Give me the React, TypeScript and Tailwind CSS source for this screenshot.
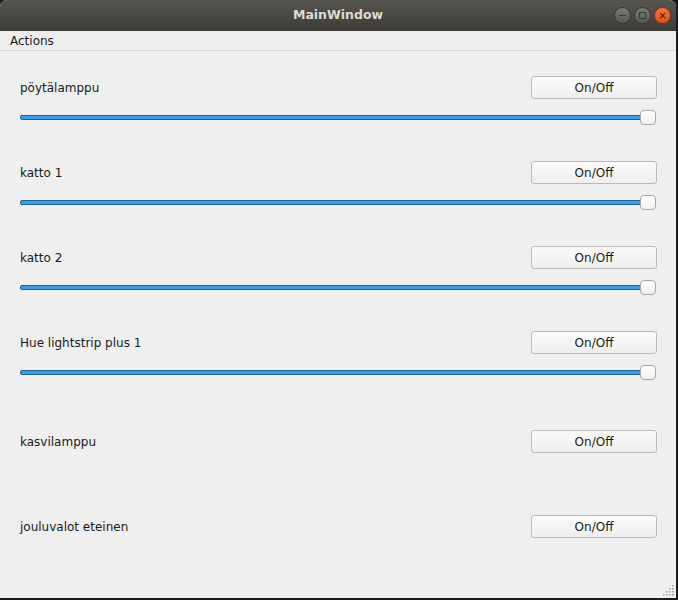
import React from "react";

const Slider = () => (
  <div className="relative h-[15px] w-[636px] ml-[20px]">
    <div className="absolute left-0 top-[5px] h-[5px] w-[628px] rounded-[2px] border border-[#1f5f92] bg-[#3c9ee0]" />
    <div className="absolute left-[620px] top-0 h-[15px] w-[16px] rounded-[4px] border border-[#a8a8a8] bg-gradient-to-b from-white to-[#f0f0f0]" />
  </div>
);

const Btn = () => (
  <button className="h-[23px] w-[126px] rounded-[3px] border border-[#b9b9b9] bg-gradient-to-b from-[#fbfbfb] to-[#eeeeee] text-[12px] text-[#1a1a1a] leading-none">
    On/Off
  </button>
);

const Row = ({ label, slider, mt }: { label: string; slider: boolean; mt: string }) => (
  <div className={mt}>
    <div className="flex items-center justify-between pl-[20px] pr-[19px]">
      <span className="text-[12px] text-[#1a1a1a]">{label}</span>
      <Btn />
    </div>
    {slider && <div className="mt-[11px]"><Slider /></div>}
  </div>
);

const Grip = () => {
  const dots: [number, number][] = [];
  for (let r = 0; r < 4; r++) {
    for (let c = 3 - r; c < 4; c++) {
      dots.push([c * 3, r * 3]);
    }
  }
  return (
    <svg className="absolute right-[2px] bottom-[2px]" width="11" height="11" viewBox="0 0 11 11">
      {dots.map(([x, y], i) => (
        <rect key={i} x={x} y={y} width="1.5" height="1.5" fill="#a0a0a0" />
      ))}
    </svg>
  );
};

export default function App() {
  return (
    <div className="w-[678px] h-[600px] bg-[#1c1c1c]" style={{ fontFamily: '"DejaVu Sans", sans-serif' }}>
      <div className="relative w-[676px] h-[598px] bg-[#efefef] rounded-t-[7px] overflow-hidden flex flex-col">
        <div className="h-[31px] bg-gradient-to-b from-[#57554f] to-[#3d3c38] flex items-center justify-center relative">
          <span className="font-bold text-[12.5px] text-[#dfdbd2]">MainWindow</span>
          <div className="absolute right-[5px] top-[7px] flex gap-[3px]">
            <div className="w-[17px] h-[17px] rounded-full bg-gradient-to-b from-[#7a7974] to-[#5a5955] border border-[#3a3935] flex items-center justify-center">
              <div className="w-[7px] h-[1.5px] bg-[#3a3935]" />
            </div>
            <div className="w-[17px] h-[17px] rounded-full bg-gradient-to-b from-[#7a7974] to-[#5a5955] border border-[#3a3935] flex items-center justify-center">
              <div className="w-[7px] h-[7px] border border-[#3a3935]" />
            </div>
            <div className="w-[17px] h-[17px] rounded-full bg-gradient-to-b from-[#f3743f] to-[#df4f17] border border-[#8a3010] flex items-center justify-center text-[#3a1a0a] text-[10px] leading-none">
              ×
            </div>
          </div>
        </div>
        <div className="h-[20px] bg-[#eeeeee] border-b border-[#d6d6d6] flex items-center pl-[10px]">
          <span className="text-[12px] text-[#1a1a1a]">Actions</span>
        </div>
        <div className="flex flex-col pt-[25px]">
          <Row label="pöytälamppu" slider mt="" />
          <Row label="katto 1" slider mt="mt-[36px]" />
          <Row label="katto 2" slider mt="mt-[36px]" />
          <Row label="Hue lightstrip plus 1" slider mt="mt-[36px]" />
          <Row label="kasvilamppu" slider={false} mt="mt-[50px]" />
          <Row label="jouluvalot eteinen" slider={false} mt="mt-[62px]" />
        </div>
        <Grip />
      </div>
    </div>
  );
}
